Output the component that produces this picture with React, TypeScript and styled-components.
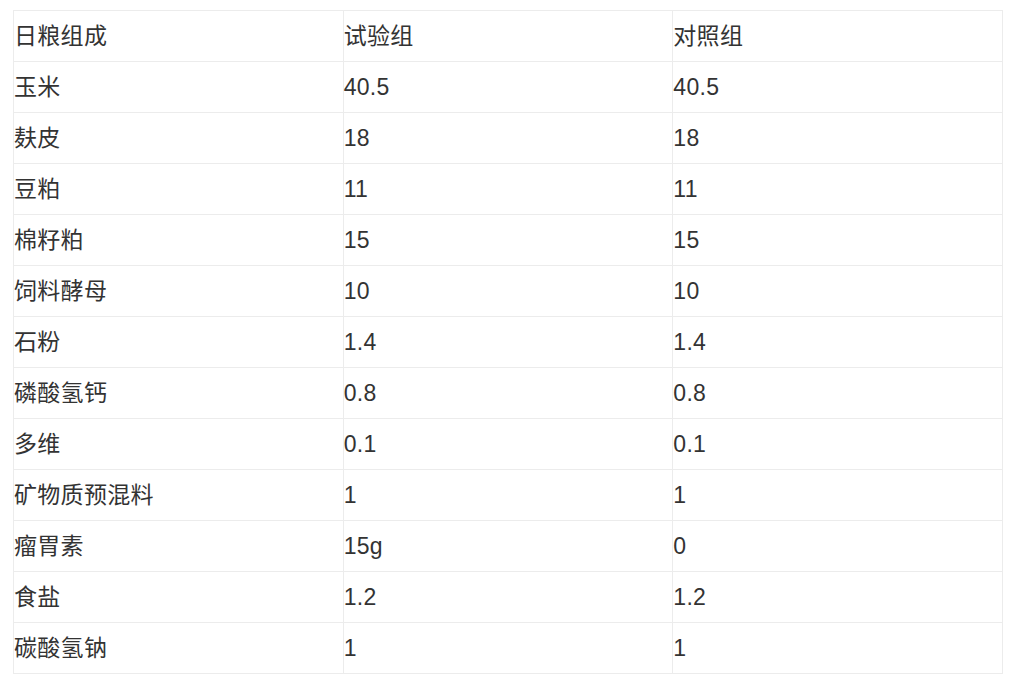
import React from "react";
import styled, { createGlobalStyle } from "styled-components";

const Global = createGlobalStyle`
  html, body { margin: 0; padding: 0; background: #ffffff; }
  body { font-family: "Liberation Sans", "Noto Sans CJK SC", sans-serif; }
`;

const Page = styled.div`
  padding: 10px 0 0 13px;
`;

const Table = styled.table`
  border-collapse: collapse;
  width: 990px;
  table-layout: fixed;
  color: #333333;
  font-size: 23px;
`;

const Row = styled.tr`
  height: 51px;
`;

const Cell = styled.td`
  border: 1px solid #ececec;
  padding: 0;
  vertical-align: middle;
  white-space: nowrap;
  line-height: 1;
  letter-spacing: 0.3px;
`;

const rows: [string, string, string][] = [
  ["日粮组成", "试验组", "对照组"],
  ["玉米", "40.5", "40.5"],
  ["麸皮", "18", "18"],
  ["豆粕", "11", "11"],
  ["棉籽粕", "15", "15"],
  ["饲料酵母", "10", "10"],
  ["石粉", "1.4", "1.4"],
  ["磷酸氢钙", "0.8", "0.8"],
  ["多维", "0.1", "0.1"],
  ["矿物质预混料", "1", "1"],
  ["瘤胃素", "15g", "0"],
  ["食盐", "1.2", "1.2"],
  ["碳酸氢钠", "1", "1"],
];

export default function App() {
  return (
    <>
      <Global />
      <Page>
        <Table>
          <tbody>
            {rows.map((r, i) => (
              <Row key={i}>
                {r.map((c, j) => (
                  <Cell key={j}>{c}</Cell>
                ))}
              </Row>
            ))}
          </tbody>
        </Table>
      </Page>
    </>
  );
}
